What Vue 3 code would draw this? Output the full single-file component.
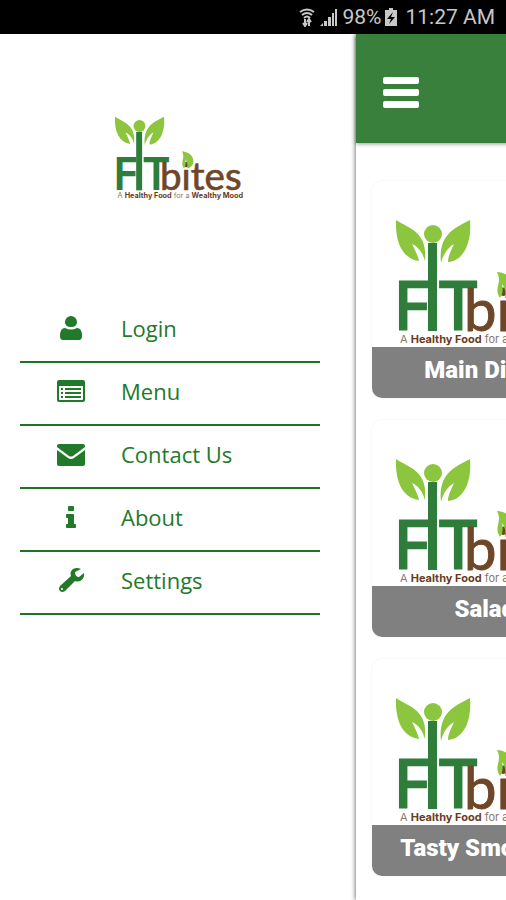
<template>
  <div class="app">
    <svg class="symbols" width="0" height="0" aria-hidden="true">
      <symbol id="fitbites" class="logo" viewBox="0 0 192 128">
        <path class="leaf" d="M1 1C15 10 33 13 30 42C28 35 24 28 17 25C20 31 23 37 24 42C8 40 0 24 1 1Z" />
        <path class="leaf" d="M75 1C60 9 43 15 46 44C48 36 52 29 59 25C56 32 53 37 53 43C69 42 77 23 75 1Z" />
        <circle class="leaf" cx="38" cy="15" r="9" />
        <path class="figure" d="M33 24h9v88h-9z" />
        <text class="fit" x="-1" y="110">F</text>
        <text class="fit" x="45" y="110">T</text>
        <text class="bites" x="69" y="112">bites</text>
        <path class="leaf" d="M102 53C113 54 121 61 119 71Q117 77 110 79C111 73 110 69 107 65C108 70 108 75 105 79C98 68 108 65 102 53Z" />
        <text class="tagline" x="5" y="124">A <tspan class="strong">Healthy Food</tspan> for a <tspan class="strong">Wealthy Mood</tspan></text>
      </symbol>
    </svg>

    <div class="status-bar">
      <svg class="status-icon" viewBox="0 0 18 20" aria-hidden="true">
        <path d="M2 5Q9 0 16 5M4 8Q9 4 14 8M6 11Q9 8 12 11" fill="none" stroke="currentColor" stroke-width="2" />
        <path d="M7 12v6M5 16l2 3 2-3M11 19v-6M9 15l2-3 2 3" fill="none" stroke="currentColor" stroke-width="2" />
      </svg>
      <svg class="status-icon" viewBox="0 0 18 20" aria-hidden="true">
        <path d="M0 19l3-3v3zM4 14h3v5H4zM8 10h3v9H8zM12 6h2v13h-2zM15 2h2v17h-2z" fill="currentColor" />
      </svg>
      <span>98%</span>
      <svg class="battery" viewBox="0 0 12 20" aria-hidden="true">
        <path fill-rule="evenodd" d="M4 1h4v2h4v16H0V3h4zM8 5l-6 7h4l-2 5 6-7H6z" fill="currentColor" />
      </svg>
      <span class="clock">11:27 AM</span>
    </div>

    <div class="stage">
      <aside class="drawer">
        <svg class="drawer-logo" role="img" aria-label="FITbites"><use href="#fitbites" /></svg>
        <nav class="menu">
          <a v-for="item in menu" :key="item.title" class="menu-item" href="#">
            <svg class="menu-icon" viewBox="0 0 28 28" aria-hidden="true">
              <path fill-rule="evenodd" :d="item.icon" fill="currentColor" />
            </svg>
            <span>{{ item.title }}</span>
          </a>
        </nav>
      </aside>

      <main class="page">
        <header class="toolbar">
          <button class="toggle" type="button" aria-label="Toggle menu">
            <svg viewBox="0 0 36 32" aria-hidden="true">
              <rect width="36" height="7" rx="2" />
              <rect y="12" width="36" height="7" rx="2" />
              <rect y="24" width="36" height="7" rx="2" />
            </svg>
          </button>
        </header>
        <div class="cards">
          <article v-for="name in categories" :key="name" class="card">
            <svg class="card-logo" role="img" aria-label="FITbites"><use href="#fitbites" /></svg>
            <h2 class="card-title">{{ name }}</h2>
          </article>
        </div>
      </main>
    </div>
  </div>
</template>

<script setup>
const menu = [
  {
    title: 'Login',
    icon: 'M14 2a6 6 0 0 1 6 6q0 5-6 5t-6-5a6 6 0 0 1 6-6zM8 14q6 3 12 0q5 0 5 8 0 4-3 4H6q-3 0-3-4 0-8 5-8z',
  },
  {
    title: 'Menu',
    icon: 'M2 3h24q2 0 2 2v18q0 2-2 2H2q-2 0-2-2V5q0-2 2-2zM2 9v13q0 1 1 1h22q1 0 1-1V9zM4 11h2v2H4zM8 11h16v2H8zM4 15h2v2H4zM8 15h16v2H8zM4 19h2v2H4zM8 19h16v2H8z',
  },
  {
    title: 'Contact Us',
    icon: 'M2 4h24q2 0 2 2v1L16 16q-2 1-4 0L0 7V6q0-2 2-2zM0 10l11 8q3 2 6 0l11-8v14q0 2-2 2H2q-2 0-2-2z',
  },
  {
    title: 'About',
    icon: 'M12 3h4q1 0 1 1v3q0 1-1 1h-4q-1 0-1-1V4q0-1 1-1zM10 11h6q1 0 1 1v9h1q1 0 1 1v2q0 1-1 1h-8q-1 0-1-1v-2q0-1 1-1h1v-6h-1q-1 0-1-1v-2q0-1 1-1z',
  },
  {
    title: 'Settings',
    icon: 'M24 3C18 0 12 4 14 10L3 20Q1 23 3 25Q5 27 8 25L18 15C23 17 28 13 27 7L22 11Q18 11 18 6ZM5 22a1 1 0 0 1 0 2a1 1 0 0 1 0-2z',
  },
];

const categories = ['Main Dishes', 'Salads', 'Tasty Smoothies'];
</script>

<style>
body {
  margin: 0;
  background: #fff;
}
</style>

<style scoped>
.app {
  min-height: 100vh;
  display: flex;
  flex-direction: column;
  overflow: hidden;
}

.symbols {
  position: absolute;
}

.logo {
  overflow: visible;
}

.leaf {
  fill: #8cc63f;
}

.figure,
.fit {
  fill: #2e7d3a;
}

.fit {
  font: 66px "Open Sans", sans-serif;
  stroke: #2e7d3a;
  stroke-width: 3px;
}

.bites {
  fill: #6f4728;
  stroke: #6f4728;
  stroke-width: 1px;
  font: 58px Lato, sans-serif;
}

.tagline {
  fill: #8c776b;
  font: 11px Inter, sans-serif;
}

.strong {
  fill: #6b3a20;
  font-weight: 700;
}

.status-bar {
  display: flex;
  align-items: center;
  justify-content: flex-end;
  gap: 4px;
  height: 34px;
  padding: 0 11px;
  background: #000;
  color: #c8c8c8;
  font: 21px Roboto, sans-serif;
}

.status-icon {
  width: 18px;
  height: 20px;
}

.battery {
  width: 12px;
  height: 20px;
}

.clock {
  margin-left: 4px;
}

.stage {
  display: flex;
  flex: 1;
}

.drawer {
  box-sizing: border-box;
  flex: 0 0 356px;
  display: flex;
  flex-direction: column;
  padding-top: 82px;
}

.drawer-logo {
  align-self: center;
  width: 128px;
  height: 85px;
  overflow: visible;
}

.menu {
  display: flex;
  flex-direction: column;
  margin: 99px 36px 0 20px;
}

.menu-item {
  display: flex;
  align-items: center;
  gap: 36px;
  height: 55px;
  padding: 0 0 6px 37px;
  border-bottom: 2px solid #1f7326;
  color: #23792a;
  font: 22px "Open Sans", sans-serif;
  text-decoration: none;
}

.menu-icon {
  width: 28px;
  height: 28px;
}

.page {
  flex: 0 0 100%;
  box-shadow: 0 0 5px rgba(0, 0, 0, 0.7);
}

.toolbar {
  display: flex;
  align-items: center;
  height: 109px;
  padding: 0 27px;
  background: #3a803d;
  box-shadow: 0 1px 4px rgba(0, 0, 0, 0.4);
}

.toggle {
  padding: 8px 0 0;
  border: 0;
  background: none;
  cursor: pointer;
}

.toggle svg {
  display: block;
  width: 36px;
  height: 32px;
  fill: #fff;
}

.cards {
  display: flex;
  flex-direction: column;
  gap: 22px;
  width: 47%;
  padding: 38px 16px 22px;
}

.card {
  display: flex;
  flex-direction: column;
  align-items: center;
  border-radius: 10px;
  box-shadow: 0 0 2px rgba(0, 0, 0, 0.08);
  overflow: hidden;
}

.card-logo {
  width: 192px;
  height: 128px;
  padding: 38px 0 0;
  overflow: visible;
}

.card-title {
  align-self: stretch;
  margin: 0;
  padding: 4px 0 9px;
  background: #808080;
  color: #fff;
  font: 900 24px/38px Roboto, sans-serif;
  text-align: center;
}
</style>
